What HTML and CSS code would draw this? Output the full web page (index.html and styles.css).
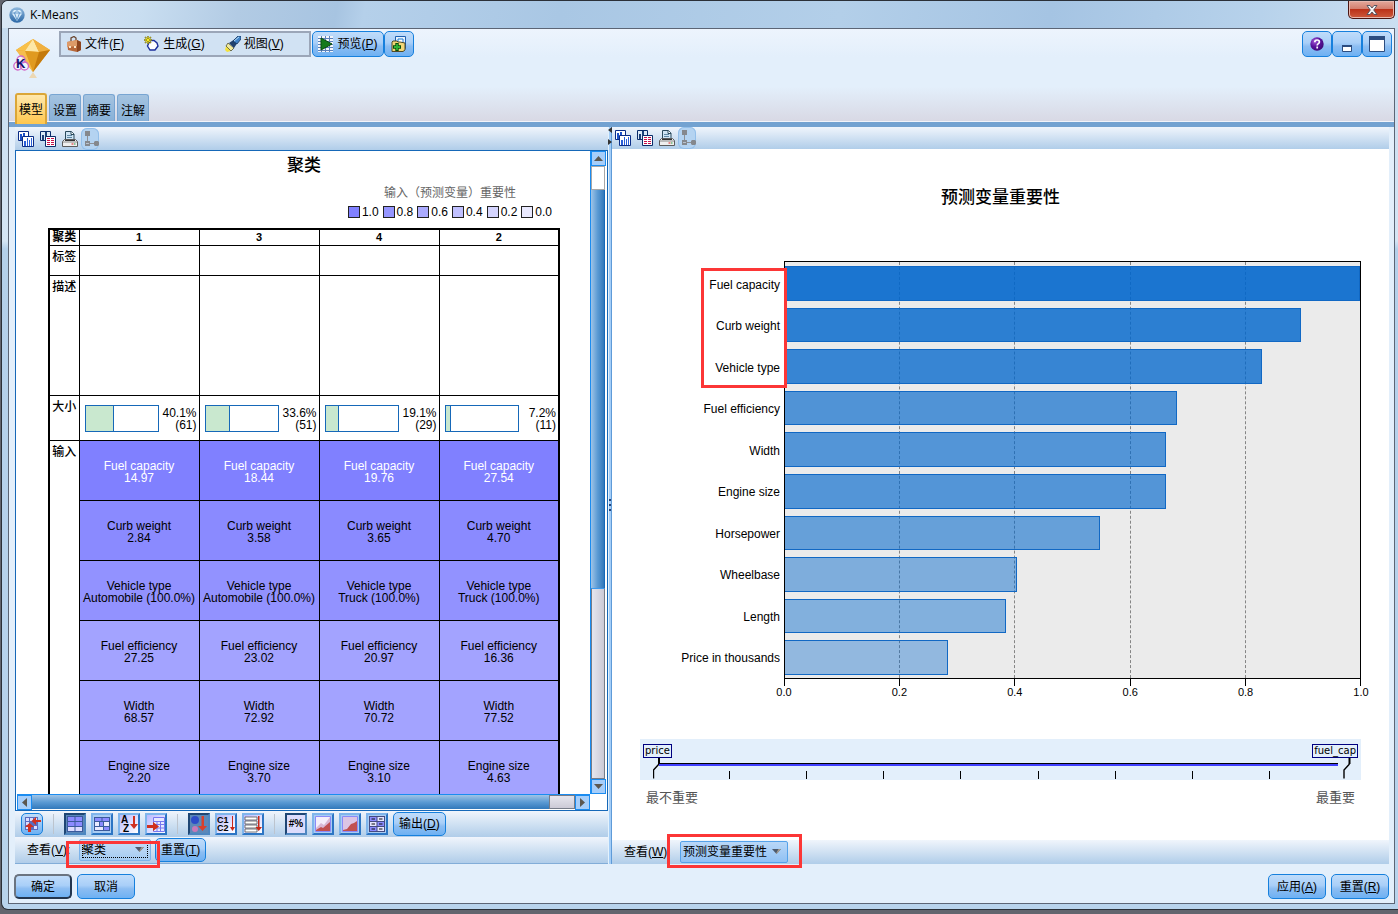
FILE: index.html
```html
<!DOCTYPE html>
<html lang="zh-CN">
<head>
<meta charset="utf-8">
<title>K-Means</title>
<link rel="stylesheet" href="styles.css">
</head>
<body>
<svg class="defs" aria-hidden="true">
  <defs>
    <linearGradient id="orb" x1="0" y1="0" x2="0" y2="1"><stop offset="0" stop-color="#8fb8dd"/><stop offset="1" stop-color="#2a67a6"/></linearGradient>
    <radialGradient id="purple" cx=".35" cy=".3" r=".8"><stop offset="0" stop-color="#a45ad8"/><stop offset=".5" stop-color="#5a129c"/><stop offset="1" stop-color="#3a0a70"/></radialGradient>
    <linearGradient id="paper" x1="0" y1="0" x2="1" y2="1"><stop offset="0" stop-color="#b9b9ff"/><stop offset="1" stop-color="#fff"/></linearGradient>
    <symbol id="i-charts" viewBox="0 0 16 16">
      <path d="M.5.5h10v9H.5z" fill="#fff" stroke="#0a2c86"/><path d="M2 3h2v6H2zM5 2h2v7H5z" fill="#1c50c8"/>
      <path d="M4.500 5.500h11v10h-11z" fill="#fff" stroke="#0a2c86"/><path d="M6 10h2v5H6zM9 7h1v8H9zM11 9h1v6h-1zM13 7h1v8h-1z" fill="#2a5fd8"/>
    </symbol>
    <symbol id="i-chart-table" viewBox="0 0 16 16">
      <path d="M.5.5h10v9H.5z" fill="#dbe9f7" stroke="#0a2c6a"/><path d="M2 4h2v5H2zM5 1h2v5H5z" fill="#1c4078"/>
      <path d="M5.500 5.500h10v10h-10z" fill="#fff" stroke="#0a2c6a"/><path d="M7 7.500h3m1 0h3M7 9.500h3m1 0h3M7 11.500h3m1 0h3M7 13.500h3m1 0h3" stroke="#c8104a"/>
    </symbol>
    <symbol id="i-print" viewBox="0 0 16 16">
      <path d="M3.500 9V.5h6l2.500 2.500v6" fill="#cfe4f4" stroke="#2b4a5c"/><path d="M9 .5V3.500h3" fill="#fff" stroke="#2b4a5c"/><path d="M5 4.500h5M5 6.500h5" stroke="#5f88a4"/>
      <path d="M2.500 8.500h11l2 2v5H.5v-5z" fill="#efefef" stroke="#5b5b5b"/><path d="M1 11h14" stroke="#8a8a8a"/><path d="M3 9.500h10" stroke="#333"/><path d="M9.500 13h2" stroke="#e02020"/><path d="M12 13h1.500" stroke="#20a040"/>
    </symbol>
    <symbol id="i-tree" viewBox="0 0 18 22">
      <path d="M6.500 7v7M8 15.500h6" fill="none" stroke="#8d9096"/><path d="M4 3h5v5H4zM4 13h5v5H4zM13 14l1-1h3l1 1v3l-1 1h-3l-1-1z" fill="#85888d"/><path d="M5 15.500h3" stroke="#b8c2cf"/>
    </symbol>
    <symbol id="i-down" viewBox="0 0 11 6"><path d="M0 0h11L5.500 6z" fill="#4c5a6c"/><path d="M5.500 6 11 0H8L5 5z" fill="#a79c90"/></symbol>
  </defs>
</svg>

<div class="window">
  <header class="titlebar">
    <svg class="app-orb" width="16" height="16" viewBox="0 0 16 16"><circle cx="8" cy="8" r="7.700" fill="url(#orb)"/><path d="M2.500 6 5 3h6l2.500 3L8 14z" fill="#d9ecfa"/><path d="M2.500 6h11M5.500 6 8 13l2.500-7L8 3.500z" fill="none" stroke="#4b88c0" stroke-width=".8"/></svg>
    <h1 class="app-title">K-Means</h1>
    <button class="close" aria-label="关闭"><svg width="12" height="10" viewBox="0 0 12 10"><path d="M1 .5h3l2 2.500L8 .5h3L7.700 5 11 9.500H8L6 7 4 9.500H1L4.300 5z" fill="#f4f4f4" stroke="#4b4e5c" stroke-width=".9"/></svg></button>
  </header>

  <main class="client">
    <section class="head">
      <div class="head-row">
        <svg class="gem" width="40" height="42" viewBox="0 0 40 42">
          <path d="M20 1 37 12 20 34 3 12z" fill="#e9a127"/><path d="M20 1 12 13 3 12z" fill="#f8c14a"/><path d="M20 1 26 14l-14-1z" fill="#fde7a6"/><path d="M20 1 37 12l-11 2z" fill="#f0b040"/><path d="M12 13l14 1-6 20z" fill="#e09a20"/><path d="M26 14l11-2-17 22z" fill="#c47a0c"/><path d="M3 12l9 1 8 21z" fill="#f6bd4e"/><path d="M20 34l4 6h-8z" fill="#ecd8b4"/>
          <g fill="#fff" fill-opacity=".5" stroke="#d068c8" stroke-width="1.300"><circle cx="8" cy="22" r="4"/><circle cx="4.800" cy="28" r="4"/><circle cx="11.500" cy="28" r="4"/></g>
          <text class="gem-k" x="3" y="30">K</text>
        </svg>
        <nav class="menu">
          <button class="menu-item">
            <svg width="16" height="16" viewBox="0 0 16 16"><path d="M5 5V2l3-1.500L10 2v3" fill="none" stroke="#6b4630" stroke-width="1.300"/><path d="M1 6 11 4l4 2v8l-4 2-9-2z" fill="#b8683a"/><path d="M1 6 11 4v6L1 11z" fill="#dd9a68"/><path d="M11 4l4 2v8l-4 2z" fill="#8d4520"/><path d="M3 10h2v2H3zM8 10h2v2H8z" fill="#fbe6c8"/></svg>
            <span>文件(<u>F</u>)</span></button>
          <button class="menu-item">
            <svg width="16" height="16" viewBox="0 0 16 16"><path d="M6 4.500h4l3 2.500 1 3-3 4H6L3.500 10z" fill="#fff" stroke="#1c2f9c" stroke-width="1.400"/><path d="M4 0v8M0 4h8M1 1l6 6M7 1 1 7" stroke="#5f5a08" stroke-width="1.400"/><path d="M4 .5v7M.5 4h7M1.500 1.500l5 5M6.500 1.500l-5 5" stroke="#ffee24" stroke-width=".9"/></svg>
            <span>生成(<u>G</u>)</span></button>
          <button class="menu-item">
            <svg width="16" height="16" viewBox="0 0 16 16"><path d="M1 10l5 5-4 1-2-2z" fill="#f4e23c"/><path d="M3 7l6 5-3 3-5-5z" fill="#efe9a0" stroke="#3c3c20" stroke-width=".7"/><path d="M4 7l6-4 3 3-4 6z" fill="#20416e"/><path d="M8 5l5-5h3v3l-4 5z" fill="#3f82c8" stroke="#15335c" stroke-width=".8"/><path d="M9 5l5-4" stroke="#b6dcf6"/></svg>
            <span>视图(<u>V</u>)</span></button>
        </nav>
        <button class="btn tall preview">
          <svg width="16" height="16" viewBox="0 0 16 16"><path d="M0 0h15v16H0z" fill="#f3f6fb"/><path d="M0 2.500h15M0 5.500h15M0 8.500h15M0 11.500h15M0 14.500h15M3.500 0v16M7.500 0v16M11.500 0v16" stroke="#5b80b8"/><path d="M3 2l11 6-11 6z" fill="#157a1c" stroke="#0a4a10"/></svg>
          <span>预览(<u>P</u>)</span></button>
        <button class="btn tall icon-only" aria-label="添加">
          <svg width="16" height="16" viewBox="0 0 16 16"><path d="M4.500.5h10v12h-10z" fill="#e8f2fc" stroke="#1d5fb0"/><path d="M7 3h5v4H7z" fill="#fff" stroke="#1d7ad0"/><path d="M1 6l1-1h4l1 1h2l5 1v7l-2 1.500H1z" fill="#f3d677" stroke="#4f4a28"/><path d="M6 7v8M2 11h8" stroke="#064d0a" stroke-width="3.400"/><path d="M6 8v6M3 11h6" stroke="#2fb336" stroke-width="1.800"/></svg></button>
        <div class="head-tools">
          <button class="btn tall tool" aria-label="帮助"><svg width="14" height="14" viewBox="0 0 14 14"><circle cx="7" cy="7" r="6.700" fill="url(#purple)"/><path d="M4.800 5.200c0-3 4.600-2.800 4.600-.2 0 1.600-2.200 1.600-2.200 3.400M7.200 9.600v1.800" fill="none" stroke="#fff" stroke-width="1.700"/></svg></button>
          <button class="btn tall tool" aria-label="最小化"><svg width="16" height="16" viewBox="0 0 16 16"><path d="M3.500 9.500h9v6h-9z" fill="#fff" stroke="#2c4d80"/><path d="M3 9h10v2H3z" fill="#2c4d80"/></svg></button>
          <button class="btn tall tool" aria-label="最大化"><svg width="16" height="16" viewBox="0 0 16 16"><path d="M.5.5h15v15H.5z" fill="#fff" stroke="#2c4d80"/><path d="M0 0h16v4H0z" fill="#2c4d80"/></svg></button>
        </div>
      </div>
      <div class="tabs" role="tablist">
        <button class="tab active" role="tab" aria-selected="true">模型</button>
        <button class="tab" role="tab">设置</button>
        <button class="tab" role="tab">摘要</button>
        <button class="tab" role="tab">注解</button>
      </div>
    </section>

    <div class="panes">
      <section class="pane left">
        <div class="strip">
          <button class="ghost" aria-label="图表"><svg width="16" height="16"><use href="#i-charts"/></svg></button>
          <button class="ghost" aria-label="表格"><svg width="16" height="16"><use href="#i-chart-table"/></svg></button>
          <button class="ghost" aria-label="打印"><svg width="16" height="16"><use href="#i-print"/></svg></button>
          <button class="ghost pressed" aria-label="树"><svg width="18" height="22"><use href="#i-tree"/></svg></button>
        </div>
        <div class="scroller">
          <div class="view">
            <h2 class="view-title">聚类</h2>
            <div class="importance">
              <p>输入（预测变量）重要性</p>
              <ul>
                <li><i class="k10"></i>1.0</li><li><i class="k8"></i>0.8</li><li><i class="k6"></i>0.6</li><li><i class="k4"></i>0.4</li><li><i class="k2"></i>0.2</li><li><i class="k0"></i>0.0</li>
              </ul>
            </div>
            <table class="clusters">
              <colgroup><col class="c-label"><col><col><col><col></colgroup>
              <tbody>
              <tr class="r-head"><th>聚类</th><th>1</th><th>3</th><th>4</th><th>2</th></tr>
              <tr class="r-tag"><th>标签</th><td></td><td></td><td></td><td></td></tr>
              <tr class="r-desc"><th>描述</th><td></td><td></td><td></td><td></td></tr>
              <tr class="r-size"><th>大小</th>
                <td><div class="size"><div class="gauge"><i style="width:40.1%"></i></div><span>40.1%<br>(61)</span></div></td>
                <td><div class="size"><div class="gauge"><i style="width:33.6%"></i></div><span>33.6%<br>(51)</span></div></td>
                <td><div class="size"><div class="gauge"><i style="width:19.1%"></i></div><span>19.1%<br>(29)</span></div></td>
                <td><div class="size"><div class="gauge"><i style="width:7.2%"></i></div><span>7.2%<br>(11)</span></div></td></tr>
              <tr class="r-in s1"><th rowspan="6">输入</th><td>Fuel capacity<br>14.97</td><td>Fuel capacity<br>18.44</td><td>Fuel capacity<br>19.76</td><td>Fuel capacity<br>27.54</td></tr>
              <tr class="r-in s2"><td>Curb weight<br>2.84</td><td>Curb weight<br>3.58</td><td>Curb weight<br>3.65</td><td>Curb weight<br>4.70</td></tr>
              <tr class="r-in s3"><td>Vehicle type<br>Automobile (100.0%)</td><td>Vehicle type<br>Automobile (100.0%)</td><td>Vehicle type<br>Truck (100.0%)</td><td>Vehicle type<br>Truck (100.0%)</td></tr>
              <tr class="r-in s4"><td>Fuel efficiency<br>27.25</td><td>Fuel efficiency<br>23.02</td><td>Fuel efficiency<br>20.97</td><td>Fuel efficiency<br>16.36</td></tr>
              <tr class="r-in s4"><td>Width<br>68.57</td><td>Width<br>72.92</td><td>Width<br>70.72</td><td>Width<br>77.52</td></tr>
              <tr class="r-in s4"><td>Engine size<br>2.20</td><td>Engine size<br>3.70</td><td>Engine size<br>3.10</td><td>Engine size<br>4.63</td></tr>
              </tbody>
            </table>
          </div>
          <div class="vbar">
            <button class="arrow" aria-label="向上"><svg width="9" height="5" viewBox="0 0 9 5"><path d="M0 5 4.500 0 9 5z" fill="#5b5750"/></svg></button>
            <div class="v-top"></div><div class="v-thumb"></div><div class="v-rest"></div>
            <button class="arrow" aria-label="向下"><svg width="9" height="5" viewBox="0 0 9 5"><path d="M0 0h9L4.500 5z" fill="#5b5750"/></svg></button>
          </div>
          <div class="hbar">
            <button class="arrow" aria-label="向左"><svg width="5" height="9" viewBox="0 0 5 9"><path d="M5 0v9L0 4.500z" fill="#5b5750"/></svg></button>
            <div class="h-thumb"></div><div class="h-rest"></div>
            <button class="arrow" aria-label="向右"><svg width="5" height="9" viewBox="0 0 5 9"><path d="M0 0v9l5-4.500z" fill="#5b5750"/></svg></button>
          </div>
        </div>
        <div class="tools">
          <button class="sq round" aria-label="转置"><svg width="18" height="18" viewBox="0 0 18 18"><path d="M2 2h13v13H2z" fill="#5a6cc0"/><path d="M3 3h3v3H3zM7 3h3v3H7zM11 3h3v3h-3zM3 7h3v3H3zM3 11h3v3H3zM11 11h3v3h-3z" fill="#dcdcff"/><path d="M18 7h-5v3L8.500 6 13 2v3h5zM5 17v-5H2l4.500-4 4.500 4H8v5z" fill="#d03020"/></svg></button>
          <i class="sep"></i>
          <button class="sq on" aria-label="网格一"><svg width="16" height="16" viewBox="0 0 16 16"><path d="M0 0h16v16H0z" fill="#3a5a9c"/><path d="M1 1h6.500v4H1zM8.500 1H15v4H8.500zM1 6h6.500v4H1zM8.500 6H15v4H8.500z" fill="#8b8bff"/><path d="M1 11h6.500v4H1zM8.500 11H15v4H8.500z" fill="#dcdcff"/></svg></button>
          <button class="sq" aria-label="网格二"><svg width="16" height="16" viewBox="0 0 16 16"><path d="M0 1h16v14H0z" fill="#3a5a9c"/><path d="M1 2h6.500v3H1zM8.500 2H15v3H8.500z" fill="#8b8bff"/><path d="M1 6h4v4H1zM10 6h5v4h-5zM1 11h8v3H1z" fill="#eaeaff"/><path d="M6 6h3v4H6zM10 11h5v3h-5z" fill="#8b8bff"/></svg></button>
          <button class="sq" aria-label="按名称排序"><svg width="18" height="18" viewBox="0 0 18 18"><path d="M0 0h18v18H0z" fill="url(#paper)"/><text class="ico-az" x="1" y="8">A</text><text class="ico-az" x="3" y="17">Z</text><path d="M13 1h2v8h3l-4 5-4-5h3z" fill="#d03020"/></svg></button>
          <button class="sq" aria-label="移至表"><svg width="18" height="18" viewBox="0 0 18 18"><path d="M0 0h18v18H0z" fill="url(#paper)"/><path d="M6.500 2.500h11v14h-11zM6.500 6.500h11M6.500 9.500h11M6.500 13h11M10 6v10M13.500 6v10" fill="#e8e8ff" stroke="#7878f0"/><path d="M0 10h6V7l6 4.500L6 16v-3H0z" fill="#d03020"/></svg></button>
          <i class="sep"></i>
          <button class="sq on" aria-label="按重要性排序"><svg width="18" height="18" viewBox="0 0 18 18"><circle cx="5" cy="5" r="4" fill="#2d4cc8"/><circle cx="5" cy="14" r="3" fill="#c878b8"/><path d="M11.500 1h2.500v10h3l-4.500 5L8 11h3.500z" fill="#d8402c"/></svg></button>
          <button class="sq" aria-label="按聚类排序"><svg width="18" height="18" viewBox="0 0 18 18"><path d="M0 0h18v18H0z" fill="url(#paper)"/><text class="ico-c" x="0" y="8">C1</text><text class="ico-c" x="0" y="16">C2</text><path d="M15 1h1v11h2l-2.500 4-2.500-4h2z" fill="#c82818"/></svg></button>
          <button class="sq" aria-label="按数值排序"><svg width="18" height="18" viewBox="0 0 18 18"><path d="M0 0h18v18H0z" fill="url(#paper)"/><path d="M1 2h12v3H1zM1 6h12v3H1zM1 10h12v3H1zM1 14h12v3H1z" fill="#fff" stroke="#555" stroke-width=".8"/><path d="M14 1h1.500v11H18l-3.300 4-3.200-4H14z" fill="#c82818"/></svg></button>
          <i class="sep"></i>
          <button class="sq on text"><span>#%</span></button>
          <button class="sq" aria-label="分布一"><svg width="18" height="18" viewBox="0 0 18 18"><path d="M1.500 1.500h15v15h-15z" fill="#f4eefa" stroke="#8a8af8"/><path d="M2 13 7 8l3 2 6-8v14H2z" fill="#d8b8d4"/><path d="M2 15l5-3 2 1 7-6v9H2z" fill="#c05050"/></svg></button>
          <button class="sq" aria-label="分布二"><svg width="18" height="18" viewBox="0 0 18 18"><path d="M1.500 1.500h15v15h-15z" fill="#dcc4e4" stroke="#8a8af8"/><path d="M2 15l4-1 4-5 3-1 3-2v10H2z" fill="#c05050"/></svg></button>
          <button class="sq" aria-label="基本"><svg width="18" height="18" viewBox="0 0 18 18"><path d="M1 1h16v16H1z" fill="#444a80"/><path d="M2 2h6.500v4H2zM9.500 7H16v4H9.500zM2 12h6.500v4H2z" fill="#8b8bff"/><path d="M9.500 2H16v4H9.500zM2 7h6.500v4H2zM9.500 12H16v4H9.500z" fill="#e4e4ff"/><path d="M3.500 4H7M11 4h3.500M3.500 9H7M11 9h3.500M3.500 14H7M11 14h3.500" stroke="#111" stroke-width="1.200"/></svg></button>
          <button class="btn low">输出(<u>D</u>)</button>
        </div>
        <div class="viewbar">
          <label for="left-view">查看(<u>V</u>):</label>
          <span class="pick focus"><select id="left-view"><option>聚类</option></select><svg width="9" height="5"><use href="#i-down"/></svg><i class="mark"></i></span>
          <button class="btn low">重置(<u>T</u>)</button>
        </div>
      </section>

      <div class="splitter"><svg width="4" height="18" viewBox="0 0 4 18"><path d="M4 0v6L0 3zM0 12v6l4-3z" fill="#333"/></svg><svg width="4" height="14" viewBox="0 0 4 14"><path d="M1 1h2v2H1zM1 6h2v2H1zM1 11h2v2H1z" fill="#23457c"/></svg><span></span></div>

      <section class="pane right">
        <div class="strip">
          <button class="ghost" aria-label="图表"><svg width="16" height="16"><use href="#i-charts"/></svg></button>
          <button class="ghost" aria-label="表格"><svg width="16" height="16"><use href="#i-chart-table"/></svg></button>
          <button class="ghost" aria-label="打印"><svg width="16" height="16"><use href="#i-print"/></svg></button>
          <button class="ghost pressed" aria-label="树"><svg width="18" height="22"><use href="#i-tree"/></svg></button>
        </div>
        <div class="chart-view">
          <h2 class="chart-title">预测变量重要性</h2>
          <div class="chart">
            <div class="names">
              <span>Fuel capacity</span><span>Curb weight</span><span>Vehicle type</span><span>Fuel efficiency</span><span>Width</span><span>Engine size</span><span>Horsepower</span><span>Wheelbase</span><span>Length</span><span>Price in thousands</span>
              <i class="mark"></i>
            </div>
            <div class="plot">
              <div class="grid"><i></i><i></i><i></i><i></i><i></i></div>
              <div class="bars">
                <i style="--v:1"></i><i style="--v:.898"></i><i style="--v:.829"></i><i style="--v:.682"></i><i style="--v:.663"></i><i style="--v:.663"></i><i style="--v:.547"></i><i style="--v:.404"></i><i style="--v:.385"></i><i style="--v:.283"></i>
              </div>
            </div>
            <div class="axis"><span>0.0</span><span>0.2</span><span>0.4</span><span>0.6</span><span>0.8</span><span>1.0</span></div>
          </div>
          <div class="range">
            <div class="tags"><span>price</span><span>fuel_cap</span></div>
            <div class="rail">
              <div class="ticks"><i></i><i></i><i></i><i></i><i></i><i></i><i></i><i></i><i></i></div>
              <div class="line">
                <svg width="8" height="21" viewBox="0 0 8 21"><path d="M6 0v6" stroke="#000" stroke-width="2"/><path d="M6 6 .5 12v8.500" fill="none" stroke="#000" stroke-width="1.400"/></svg>
                <b></b>
                <svg width="8" height="21" viewBox="0 0 8 21"><path d="M6.500 0v6" stroke="#000" stroke-width="2"/><path d="M6.500 6 1 12v8.500" fill="none" stroke="#000" stroke-width="1.400"/></svg>
              </div>
            </div>
          </div>
          <div class="ends"><span>最不重要</span><span>最重要</span></div>
        </div>
        <div class="viewbar">
          <label for="right-view">查看(<u>W</u>):</label>
          <span class="pick wide"><select id="right-view"><option>预测变量重要性</option></select><svg width="9" height="5"><use href="#i-down"/></svg><i class="mark"></i></span>
        </div>
      </section>
    </div>

    <footer class="foot">
      <button class="btn act default">确定</button>
      <button class="btn act">取消</button>
      <span class="grow"></span>
      <button class="btn act">应用(<u>A</u>)</button>
      <button class="btn act">重置(<u>R</u>)</button>
    </footer>
  </main>
</div>
</body>
</html>
```

FILE: styles.css
```css
* { box-sizing: border-box; }

body {
  margin: 0;
  height: 100vh;
  padding: 0 0 4px 1px;
  overflow: hidden;
  background: #63656e;
  color: #000;
  font: 12px/14px "Liberation Sans", "Noto Sans CJK SC", sans-serif;
}

button, select {
  margin: 0;
  padding: 0;
  border: 0;
  background: none;
  color: inherit;
  font: inherit;
}

h1, h2, p, ul { margin: 0; padding: 0; }
svg { display: block; flex: none; }
.defs { position: absolute; width: 0; height: 0; }
.grow { flex: 1; }

.mark {
  position: absolute;
  border: 3px solid #fc3636;
  pointer-events: none;
  z-index: 3;
}

/* Window frame */
.window {
  display: flex;
  flex-direction: column;
  height: 100%;
  padding: 0 3px 5px 6px;
  border: 1px solid #2b3038;
  border-width: 1px 0 1px 1px;
  border-radius: 7px 0 0 7px;
  background: linear-gradient(#c4daee 0, #d5e5f4 240px, #b4d0ea 248px, #b8d3ec 100%);
}

.titlebar {
  display: flex;
  align-items: center;
  flex: none;
  height: 27px;
  margin: 0 -3px 0 -6px;
  padding-left: 7px;
  border-radius: 6px 0 0 0;
  background: linear-gradient(100deg, #d9e7f4 0, #c9def1 10%, #b2cbe4 17%, #a7c4e1 24%, #b5d0ea 26%, #a9c7e4 40%, #b3cfe9 60%, #a5c4e3 75%, #b7d2eb 90%, #cbdff1 100%);
}

.app-title { margin-left: 5px; font: 12px/16px "Open Sans", sans-serif; }

.close {
  display: flex;
  justify-content: center;
  align-items: center;
  align-self: flex-start;
  width: 47px;
  height: 18px;
  margin: 0 3px 0 auto;
  border: 1px solid #4a1512;
  border-top: 0;
  border-radius: 0 0 5px 5px;
  background: linear-gradient(#e4a99c 0, #d4806f 45%, #bb3219 50%, #cd5a3c 100%);
  box-shadow: inset 0 0 0 1px #e8b8ae;
}

.client {
  display: flex;
  flex-direction: column;
  flex: 1;
  min-height: 0;
  border: 1px solid #5c6575;
  background: #e3effb;
}

/* Header */
.head {
  display: flex;
  flex-direction: column;
  flex: none;
  background: linear-gradient(#edf4fd 0, #e3effb 30%, #e3effb 62%, #d8d8e4 100%);
  border-bottom: 5px solid #73a2d1;
}

.head-row { display: flex; height: 49px; padding: 2px 2px 0 4px; }
.gem { margin: 7px 6px 0 0; }
.gem-k { font: 700 13px "Liberation Sans", sans-serif; fill: #14146e; }

.menu {
  display: flex;
  align-items: center;
  flex: none;
  gap: 20px;
  width: 252px;
  height: 26px;
  margin-right: 1px;
  padding-left: 5px;
  border: 2px solid #9ba6b8;
  background: #d1e2f3;
}
.menu-item { display: flex; align-items: center; gap: 3px; }

.btn {
  display: flex;
  justify-content: center;
  align-items: center;
  border: 1px solid #1680dd;
  border-radius: 5px;
  background: linear-gradient(#c0dcfa 0, #a9cff8 45%, #8cbdf2 60%, #6eb1f3 100%);
  white-space: nowrap;
}
.tall { height: 26px; }
.preview { gap: 3px; width: 72px; }
.icon-only { width: 30px; }
.tool { width: 30px; }
.head-tools { display: flex; margin-left: auto; }

.tabs { display: flex; align-items: flex-end; gap: 2px; height: 44px; padding-left: 6px; border-bottom: 1px solid #f2f4fa; }
.tab {
  width: 32px;
  height: 27px;
  padding-top: 6px;
  border: 1px solid #78a5d2;
  border-bottom: 0;
  border-radius: 3px 3px 0 0;
  background: linear-gradient(#a4c3e0, #88b1d8);
}
.tab.active {
  position: relative;
  z-index: 1;
  height: 31px;
  margin-bottom: -3px;
  padding-top: 0;
  border: 2px solid #dba637;
  border-bottom: 0;
  background: linear-gradient(#ffe8ad, #ffc64c);
}

/* Panes */
.panes { display: flex; flex: 1; min-height: 0; padding: 0 5px 0 6px; }
.pane { display: flex; flex-direction: column; min-width: 0; }
.left { flex: 593 1 0; border-bottom: 1px solid #82add8; }
.right { flex: 777 1 0; }

.strip {
  display: flex;
  align-items: center;
  flex: none;
  gap: 6px;
  height: 23px;
  padding-left: 3px;
  background: linear-gradient(#f0f5fc, #b0cde9);
}
.right .strip { height: 22px; }
.ghost { display: flex; }
.pressed { margin: 0 0 0 -3px; border-radius: 6px; background: #b4d3f1; box-shadow: inset 0 0 0 1px #93bfea; }

.splitter {
  display: flex;
  flex-direction: column;
  justify-content: space-between;
  flex: none;
  width: 4px;
  background: linear-gradient(90deg, #e3f2fd 0 1px, #a3cdf7 1px 3px, #5f9bd8 3px);
}

.scroller {
  display: grid;
  grid-template: minmax(0, 1fr) 15px / minmax(0, 1fr) 15px;
  flex: 1;
  min-height: 0;
  padding: 0 2px 1px 1px;
  border: 1px solid #1668b8;
  background: #fff;
}

.view { display: flex; flex-direction: column; overflow: hidden; padding: 0 30px 0 31px; }
.view-title { flex: none; font: 500 17px/26px "Noto Sans CJK SC", sans-serif; text-align: center; }
.importance { flex: none; align-self: flex-end; margin-right: 8px; padding: 8px 0 9px; }
.importance p { color: #666; line-height: 16px; text-align: center; }
.importance ul { display: flex; gap: 4px; padding-top: 4px; list-style: none; }
.importance li { display: flex; align-items: center; gap: 2px; line-height: 14px; }
.importance i { width: 12px; height: 12px; border: 1px solid #222; }
.k10 { background: #8080ff; } .k8 { background: #9595ff; } .k6 { background: #ababff; }
.k4 { background: #c0c0ff; } .k2 { background: #d5d5ff; } .k0 { background: #eaeaff; }

.clusters {
  flex: none;
  width: 100%;
  table-layout: fixed;
  border-collapse: collapse;
  border: 2px solid #000;
}
.c-label { width: 30px; }
.clusters td, .clusters th { padding: 0; border: 1px solid #000; font-weight: 400; overflow: hidden; }
.clusters th:first-child { padding: 4px 0 0; vertical-align: top; white-space: nowrap; font-weight: 500; }
.clusters .r-head th { padding: 0; height: 16px; font-size: 11px; font-weight: 700; vertical-align: middle; }
.clusters .r-head th:first-child { font-size: 12px; }
.r-tag { height: 30px; }
.r-desc { height: 120px; }
.r-size { height: 45px; }
.r-in { height: 60px; }
.clusters .r-in td { padding-top: 4px; line-height: 12px; text-align: center; white-space: nowrap; }
.clusters .s1 td { background: #8080ff; color: #fff; }
.s2 td { background: #8a8aff; }
.s3 td { background: #9292ff; }
.s4 td { background: #a3a3ff; }

.size { display: flex; justify-content: space-between; align-items: center; padding: 2px 2px 0 5px; line-height: 12px; text-align: right; }
.gauge { width: 74px; height: 27px; border: 1px solid #1668b8; }
.gauge i { display: block; height: 100%; border-right: 1px solid #1668b8; background: #c9e8cf; }

.arrow { display: flex; justify-content: center; align-items: center; flex: none; width: 15px; height: 15px; border: 1px solid #1b8cf0; background: #a6cefa; }
.vbar { display: flex; flex-direction: column; border-left: 1px solid #1b8cf0; }
.v-top { flex: 22; border: 1px solid #a8a8a8; background: #fff; }
.v-thumb { flex: 400; border-right: 1px solid #1668b8; background: linear-gradient(90deg, #a0c4e6, #5c9bd4 50%, #3178bb); }
.v-rest { flex: 190; border: 1px solid #777c88; border-top-color: #3a9af0; background: linear-gradient(90deg, #e6e6ee, #cccad6); }
.hbar { display: flex; border-top: 1px solid #1b8cf0; }
.h-thumb { flex: 520; background: linear-gradient(#a0c4e6, #5c9bd4 50%, #3178bb); }
.h-rest { flex: 24; border: 1px solid #777c88; background: linear-gradient(#e6e6ee, #cccad6); }

.tools { display: flex; align-items: center; flex: none; gap: 5px; height: 26px; padding-left: 6px; background: linear-gradient(#f0f5fc, #b0cde9); }
.sq { display: flex; justify-content: center; align-items: center; flex: none; width: 22px; height: 22px; border: 2px solid #2c75c4; border-top-color: #7fb5ec; border-left-color: #7fb5ec; background: #a9ccf3; }
.sq.on { border-color: #1f4674 #4d86c0 #4d86c0 #1f4674; background: #5c88b8; }
.sq.round { border: 1px solid #1680dd; border-radius: 5px; background: linear-gradient(#c0dcfa, #6eb1f3); }
.sq.text span { width: 18px; background: #dcdcfc; font-size: 10px; font-weight: 700; line-height: 18px; }
.ico-az { font: 700 10px "Liberation Sans", sans-serif; }
.ico-c { font: 700 9px "Liberation Sans", sans-serif; }
.sep { width: 1px; height: 20px; margin: 0 5px; background: #bcc4ce; }
.low { height: 24px; padding: 0 5px; }

.viewbar { display: flex; align-items: center; flex: none; height: 26px; padding-left: 12px; background: linear-gradient(#f0f5fc, #b0cde9); }
.right .viewbar { height: 24px; }
.viewbar label { width: 52px; white-space: nowrap; overflow: hidden; }
.right .viewbar label { width: 56px; }
.pick { display: flex; align-items: center; position: relative; width: 72px; height: 22px; margin-right: 4px; }
.pick.wide { width: 108px; }
.pick select { appearance: none; width: 100%; height: 100%; padding: 0 2px; border: 1px solid #55a2ea; border-radius: 2px; background: linear-gradient(#b9d7f7, #90c1f4); }
.pick > svg { position: absolute; right: 7px; top: 8px; }
.focus select { outline: 1px dotted #000; outline-offset: -4px; border-color: #7cb3ea; background: linear-gradient(#c8def5, #a5cbf2); }
.focus .mark { inset: 2px -9px -7px -13px; }
.wide .mark { inset: -7px -14px -5px -13px; }

/* Chart */
.chart-view { display: flex; flex-direction: column; flex: 1; min-height: 0; padding: 35px 28px 0; background: #fff; }
.chart-title { font: 500 17px/24px "Noto Sans CJK SC", sans-serif; text-align: center; }
.chart { display: grid; grid-template: minmax(0, 1fr) 20px / 144px minmax(0, 1fr); flex: 1; margin-top: 53px; }
.names { display: flex; flex-direction: column; position: relative; padding: 3px 4px 0 0; }
.names span { display: flex; flex: 1; justify-content: flex-end; align-items: center; }
.names .mark { top: 7px; right: -3px; width: 86px; height: 120px; }
.plot { display: grid; border: 1px solid #000; background: #ebebeb; }
.grid, .bars { grid-area: 1 / 1; display: flex; }
.grid i { flex: 1; border-right: 1px dashed #858585; }
.grid i:last-child { border: 0; }
.bars { flex-direction: column; padding-top: 1px; }
.bars i {
  flex: 1;
  width: calc(100% * var(--v));
  margin: 3px 0 4px;
  border: 1px solid #1168c4;
  border-left: 0;
  background: rgba(0, 102, 204, calc(.175 + .71 * var(--v)));
}
.bars i:last-child { margin-bottom: 3px; }
.axis { grid-column: 2; display: flex; justify-content: space-between; margin: 0 -16px; font-size: 11px; }
.axis span { display: flex; flex-direction: column; align-items: center; width: 32px; line-height: 12px; }
.axis span::before { content: ""; width: 1px; height: 7px; background: #000; }

.range { flex: none; height: 41px; margin-top: 40px; padding: 5px 3px 0; background: #e3effb; }
.tags { display: flex; justify-content: space-between; }
.tags span { height: 14px; padding: 0 1px; border: 1px solid #000080; font: 10px/12px "DejaVu Sans", sans-serif; }
.rail { display: grid; margin: 0 7px 0 10px; }
.ticks, .line { grid-area: 1 / 1; display: flex; }
.ticks { align-items: flex-end; margin-right: 5px; }
.ticks i { flex: 1; height: 8px; border-left: 1px solid #000; }
.ticks i:first-child { border: 0; }
.line b { flex: 1; height: 3px; margin: 5px 5px 0 -2px; border-top: 1px solid #000; background: #4040ff; }
.ends { display: flex; justify-content: space-between; flex: none; height: 60px; padding: 10px 6px 0; color: #555; font-size: 13px; line-height: 16px; }

/* Footer */
.foot { display: flex; flex: none; gap: 5px; height: 39px; padding: 10px 5px 0 5px; }
.act { width: 58px; height: 25px; }
.default { border: 2px solid #24364e; border-top-color: #6b7480; border-left-color: #6b7480; }
```
